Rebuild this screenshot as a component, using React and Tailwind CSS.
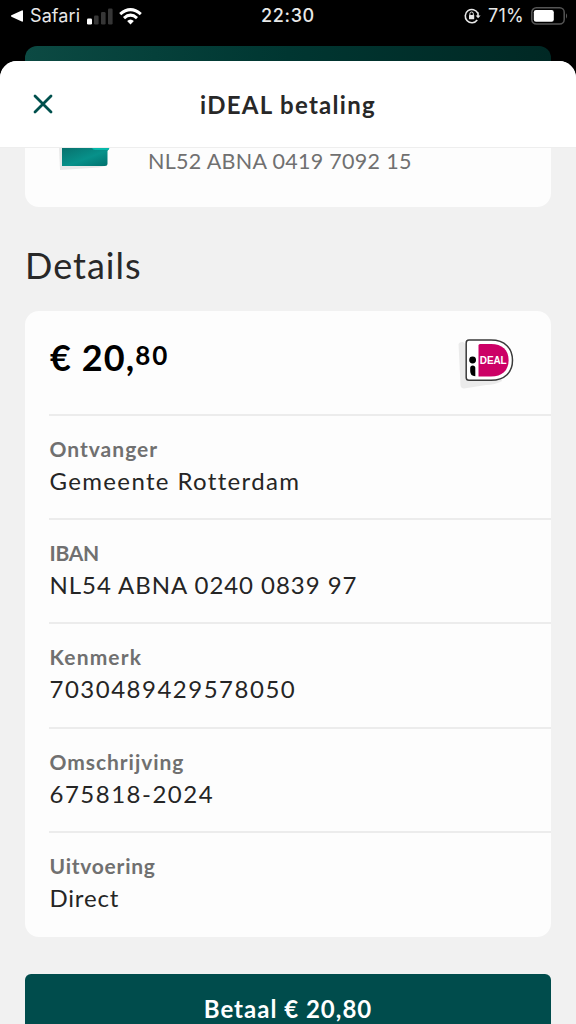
import React from 'react';

const details = [
  { label: 'Ontvanger', value: 'Gemeente Rotterdam', labelClass: 'tracking-[1px]', valueClass: 'tracking-[1.35px]' },
  { label: 'IBAN', value: 'NL54 ABNA 0240 0839 97', labelClass: 'tracking-[-0.3px]', valueClass: 'tracking-[0.95px]' },
  { label: 'Kenmerk', value: '7030489429578050', labelClass: 'tracking-[1.15px]', valueClass: 'tracking-[1.5px]' },
  { label: 'Omschrijving', value: '675818-2024', labelClass: 'tracking-[0.95px]', valueClass: 'tracking-[1.5px]' },
  { label: 'Uitvoering', value: 'Direct', labelClass: 'tracking-[0.75px]', valueClass: 'tracking-[0.8px]' },
];

function StatusBar() {
  return (
    <div className="grid h-[46px] shrink-0 grid-cols-[1fr_auto_1fr] items-start bg-black pt-[6px] font-['Inter',sans-serif] text-[18px] leading-5 text-[#e8e8e8]">
      <div className="flex h-5 items-center pl-[11px]">
        <svg width="12" height="12" viewBox="0 0 12 12" fill="white">
          <path d="M.4 5.3 10.8.4Q12 0 12 1.2V10.8Q12 12 10.8 11.6L.4 6.7Q-.4 6 .4 5.3Z" />
        </svg>
        <span className="ml-[7px] w-[50px] tracking-[0.1px]">Safari</span>
        <svg className="ml-[7px]" width="26" height="17" viewBox="0 0 26 17">
          <rect x="0" y="10.5" width="5" height="6" rx="1.3" fill="white" />
          <rect x="7" y="7.5" width="4.6" height="9" rx="1.3" fill="#363636" />
          <rect x="14" y="4" width="4.6" height="12.5" rx="1.3" fill="#363636" />
          <rect x="21" y="0.5" width="4.6" height="16" rx="1.3" fill="#363636" />
        </svg>
        <svg className="ml-[6px]" width="23" height="17" viewBox="0 0 23 17" fill="none" stroke="white" strokeWidth="3">
          <path d="M1.2 6.2Q11.5-3 21.8 6.2" />
          <path d="M5 10.1Q11.5 4.2 18 10.1" />
          <path d="M11.5 16.5 8.1 13Q11.5 10 14.9 13Z" fill="white" stroke="none" />
        </svg>
      </div>
      <span className="text-[18px] font-medium tracking-[0.65px]">22:30</span>
      <div className="flex h-5 items-center justify-end pr-[8px]">
        <svg width="17" height="16" viewBox="0 0 17 16" fill="none" stroke="#e8e8e8" strokeWidth="1.6">
          <path d="M13.8 5.2A6.6 6.6 0 1 0 13.2 12" />
          <path d="M14 4.5V8" />
          <path d="M11.6 7.4H16.6L14.1 10.3Z" fill="#e8e8e8" stroke="none" />
          <rect x="5" y="7" width="5.2" height="4.2" rx=".5" fill="#e8e8e8" stroke="none" />
          <path d="M5.9 7.2V5.7a1.7 1.7 0 0 1 3.4 0v1.5" strokeWidth="1" />
        </svg>
        <span className="ml-[7px] w-[36px] tracking-[0.2px]">71%</span>
        <svg className="ml-[7px]" width="37" height="18" viewBox="0 0 37 18">
          <rect x="0.8" y="0.8" width="32.4" height="16.2" rx="4.5" fill="none" stroke="#555" strokeWidth="1.5" />
          <rect x="2.8" y="3" width="20" height="11.8" rx="2.2" fill="white" />
          <path d="M35 6.3q2.3 2.7 0 5.4z" fill="#555" />
        </svg>
      </div>
    </div>
  );
}

function IdealLogo() {
  return (
    <svg width="58" height="52" viewBox="0 0 58 52">
      <path d="M0.5 5Q1.5 2.7 5 3L40 30L44 42Q37 46 28 46L6 49.5Q3 49.5 2.5 46.5Z" fill="#ebebeb" />
      <path d="M11 1.1H33C47 1.1 54.5 9.5 54.5 21.3S47 41.2 33 41.2H11Q8.2 41.2 8.2 38.4V3.9Q8.2 1.1 11 1.1Z" fill="white" stroke="#3a3a3a" strokeWidth="1.5" />
      <path d="M22 5H33C44 5 50.6 11 50.6 21.2S44 37.5 33 37.5H20.5V6.5Q20.5 5 22 5Z" fill="#cc0066" />
      <circle cx="14.6" cy="21" r="3.4" fill="black" />
      <path d="M12.2 29Q12.2 26.5 14.7 26.5Q17.3 26.5 17.3 29V37.2Q12.2 37.2 12.2 32Z" fill="black" />
      <text x="21.8" y="24.5" fill="white" fontFamily="Liberation Sans, sans-serif" fontSize="10" fontWeight="bold" textLength="26.8">DEAL</text>
    </svg>
  );
}

function AccountCard() {
  return (
    <section className="mx-[25px] flex h-[59px] shrink-0 overflow-hidden rounded-b-[14px] bg-[#fdfdfd]">
      <svg className="ml-[34px] shrink-0" width="52" height="24" viewBox="0 0 52 24">
        <defs>
          <linearGradient id="pass" x1="0" y1="0" x2="1" y2="1">
            <stop offset="0" stopColor="#08716d" />
            <stop offset="0.55" stopColor="#07918a" />
            <stop offset="1" stopColor="#00706d" />
          </linearGradient>
        </defs>
        <path d="M0 0H4L46 18L40 19.5L1 22Z" fill="#e9e9e9" />
        <path d="M3 0H50V1L48.5 3V16Q48.5 18 46 18H3Z" fill="url(#pass)" />
        <path d="M33 0H50.5Q50 2 48 2H36Q34 2 33 0Z" fill="#06b8aa" />
      </svg>
      <span className="ml-[37px] text-[21.5px] leading-[26px] tracking-[0.3px] text-[#707070]">NL52 ABNA 0419 7092 15</span>
    </section>
  );
}

function DetailRow({ label, value, labelClass, valueClass }) {
  return (
    <div className="ml-[24px] h-[104.4px] border-t-2 border-[#ececec] pt-[19px] pl-[0.5px]">
      <p className={`text-[21px] leading-7 font-bold text-[#707070] ${labelClass}`}>{label}</p>
      <p className={`mt-[2px] text-[24px] leading-8 text-[#252525] ${valueClass}`}>{value}</p>
    </div>
  );
}

export default function App() {
  return (
    <main className="flex h-[1024px] w-[576px] flex-col overflow-hidden bg-black font-['Lato',sans-serif]">
      <StatusBar />
      <div className="mx-[25px] h-[15px] shrink-0 rounded-t-[12px] bg-linear-to-r from-[#0c4a43] via-[#003631] to-[#002824]" />
      <div className="flex min-h-0 flex-1 flex-col overflow-hidden rounded-t-[17px] bg-[#f1f1f1]">
        <header className="grid h-[87px] shrink-0 grid-cols-[86px_1fr_86px] items-center border-b border-[#eeeeee] bg-white">
          <button className="flex justify-center" aria-label="Sluiten">
            <svg width="20" height="20" viewBox="0 0 20 20" fill="none" stroke="#00504d" strokeWidth="2.8" strokeLinecap="round">
              <path d="m2 2 16 16M18 2 2 18" />
            </svg>
          </button>
          <h1 className="pt-[2px] text-center text-[24px] font-bold tracking-[1.3px] text-[#282828]">iDEAL betaling</h1>
        </header>
        <AccountCard />
        <h2 className="mt-[35px] ml-[25px] h-[69px] shrink-0 text-[36px] leading-[46px] tracking-[1px] text-[#282828]">Details</h2>
        <section className="mx-[25px] h-[626px] shrink-0 overflow-hidden rounded-[14px] bg-[#fdfdfd]">
          <div className="flex h-[102.5px] justify-between pl-[25px]">
            <p className="flex items-start pt-[23px] font-bold text-black">
              <span className="text-[36px] leading-[46px] tracking-[1.1px]">€ 20,</span>
              <span className="pt-[4px] text-[26px] leading-[34px] tracking-[1.8px]">80</span>
            </p>
            <div className="pt-[28px] pr-[35px]">
              <IdealLogo />
            </div>
          </div>
          {details.map((row) => <DetailRow key={row.label} {...row} />)}
        </section>
        <button className="mx-[25px] mt-[37px] h-[70px] shrink-0 rounded-[6px] bg-[#004c4c] text-[24px] font-bold tracking-[1px] text-white">
          Betaal € 20,80
        </button>
      </div>
    </main>
  );
}
